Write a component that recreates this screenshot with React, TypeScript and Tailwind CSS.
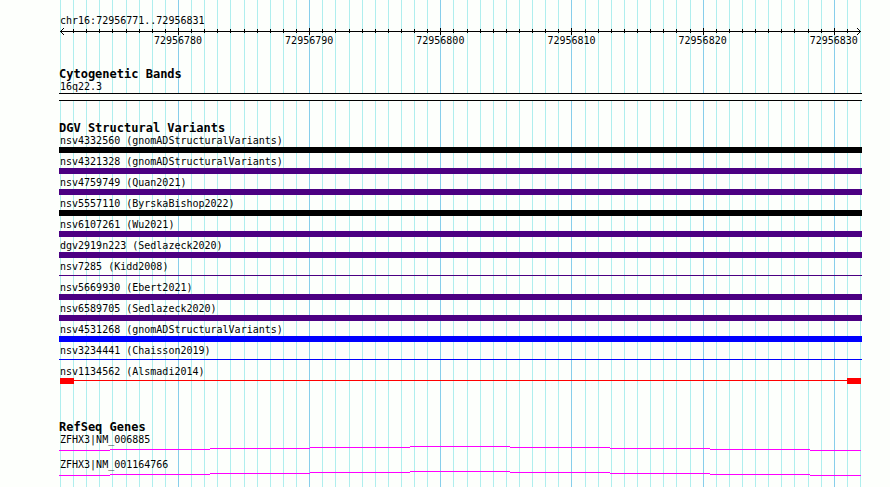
import type { ReactNode } from 'react';
import clsx from 'clsx';

const START = 72956771;
const END = 72956831;
const SPAN = END - START + 1;

type Variant = {
  id: string;
  source: string;
  shape: 'bar' | 'line' | 'ends';
  color: string;
};

const VARIANTS: Variant[] = [
  { id: 'nsv4332560', source: 'gnomADStructuralVariants', shape: 'bar', color: 'bg-black' },
  { id: 'nsv4321328', source: 'gnomADStructuralVariants', shape: 'bar', color: 'bg-[#4b0082]' },
  { id: 'nsv4759749', source: 'Quan2021', shape: 'bar', color: 'bg-[#4b0082]' },
  { id: 'nsv5557110', source: 'ByrskaBishop2022', shape: 'bar', color: 'bg-black' },
  { id: 'nsv6107261', source: 'Wu2021', shape: 'bar', color: 'bg-[#4b0082]' },
  { id: 'dgv2919n223', source: 'Sedlazeck2020', shape: 'bar', color: 'bg-[#4b0082]' },
  { id: 'nsv7285', source: 'Kidd2008', shape: 'line', color: 'bg-[#4b0082]' },
  { id: 'nsv5669930', source: 'Ebert2021', shape: 'bar', color: 'bg-[#4b0082]' },
  { id: 'nsv6589705', source: 'Sedlazeck2020', shape: 'bar', color: 'bg-[#4b0082]' },
  { id: 'nsv4531268', source: 'gnomADStructuralVariants', shape: 'bar', color: 'bg-[#0000ff]' },
  { id: 'nsv3234441', source: 'Chaisson2019', shape: 'line', color: 'bg-[#0000ff]' },
  { id: 'nsv1134562', source: 'Alsmadi2014', shape: 'ends', color: 'bg-[#ff0000]' },
];

const GENES = ['ZFHX3|NM_006885', 'ZFHX3|NM_001164766'];

// One entry per base, plus the closing edge.
const BASES = Array.from({ length: SPAN + 1 }, (_, i) => ({
  pos: START + i,
  x: `${(i / SPAN) * 100}%`,
  major: (START + i) % 10 === 0,
}));

function GridLines() {
  return (
    <svg
      aria-hidden="true"
      className="absolute inset-y-0 left-px right-[2px] h-full w-[calc(100%-3px)] overflow-visible"
      shapeRendering="crispEdges"
    >
      {BASES.map((b) => (
        <rect key={b.pos} x={b.x} y="0" width="1" height="100%" fill={b.major ? '#87ceeb' : '#afeeee'} />
      ))}
    </svg>
  );
}

function Ruler() {
  return (
    <svg className="ml-px block h-5 w-[calc(100%-3px)] overflow-visible" shapeRendering="crispEdges">
      <rect x="0" y="4" width="100%" height="1" />
      {BASES.slice(1, -1).map((b) => (
        <rect key={b.pos} x={b.x} y={b.major ? 1 : 2} width="1" height={b.major ? 7 : 4} />
      ))}
      <path d="M3 1h1v1h-1zM2 2h1v1h-1zM1 3h1v1h-1zM0 4h1v1h-1zM1 5h1v1h-1zM2 6h1v1h-1zM3 7h1v1h-1z" />
      <svg x="100%" y="0" width="1" height="10" className="overflow-visible">
        <path d="M-3 1h1v1h-1zM-2 2h1v1h-1zM-1 3h1v1h-1zM0 4h1v1h-1zM-1 5h1v1h-1zM-2 6h1v1h-1zM-3 7h1v1h-1z" />
      </svg>
      {BASES.filter((b) => b.major).map((b) => (
        <text key={b.pos} x={b.x} y="17" textAnchor="middle">
          {b.pos}
        </text>
      ))}
    </svg>
  );
}

function Track({ title, children }: { title: string; children: ReactNode }) {
  return (
    <section>
      <h2 className="text-[12px] leading-[14px] font-bold">{title}</h2>
      {children}
    </section>
  );
}

function VariantGlyph({ shape, color }: { shape: Variant['shape']; color: string }) {
  if (shape === 'bar') return <div className={clsx('h-1.5', color)} />;

  if (shape === 'line') {
    return (
      <div className="h-1.5 pt-0.5">
        <div className={clsx('h-px', color)} />
      </div>
    );
  }

  // breakpoints at both ends, joined by a hairline
  return (
    <div className="mr-px ml-px flex h-1.5">
      <div className={clsx('w-3.5', color)} />
      <div className="flex-1 pt-0.5">
        <div className={clsx('h-px', color)} />
      </div>
      <div className={clsx('w-3.5', color)} />
    </div>
  );
}

function GeneGlyph() {
  return (
    <svg
      aria-hidden="true"
      className="block h-[5px] w-[calc(100%-1px)]"
      viewBox="0 0 802 5"
      preserveAspectRatio="none"
      shapeRendering="crispEdges"
    >
      <path
        fill="#ff00ff"
        d="M0 4h51v1H0zM51 3h100v1H51zM151 2h100v1H151zM251 1h100v1H251zM351 0h100v1H351zM451 1h100v1H451zM551 2h100v1H551zM651 3h100v1H651zM751 4h51v1H751z"
      />
    </svg>
  );
}

export default function App() {
  return (
    <main className="min-h-screen bg-[#fdfffc] pr-7 pl-[59px] font-['DejaVu_Sans_Mono',monospace] text-[10px] leading-3 text-black">
      <div className="relative min-h-screen">
        <GridLines />

        <div className="relative pt-[15px]">
          <header>
            <h1 className="pl-px">
              chr16:{START}..{END}
            </h1>
            <Ruler />
          </header>

          <div className="flex flex-col gap-5 pt-5">
            <Track title="Cytogenetic Bands">
              <p className="pl-px">16q22.3</p>
              <div className="h-2 border-y border-black bg-[#fdfffc]" />
            </Track>

            <Track title="DGV Structural Variants">
              <ul className="flex flex-col gap-[3px] pb-4">
                {VARIANTS.map((v) => (
                  <li key={v.id}>
                    <p className="pl-px">
                      {v.id} ({v.source})
                    </p>
                    <VariantGlyph shape={v.shape} color={v.color} />
                  </li>
                ))}
              </ul>
            </Track>

            <Track title="RefSeq Genes">
              <ul className="flex flex-col gap-2">
                {GENES.map((g) => (
                  <li key={g}>
                    <p className="pl-px">{g}</p>
                    <GeneGlyph />
                  </li>
                ))}
              </ul>
            </Track>
          </div>
        </div>
      </div>
    </main>
  );
}
